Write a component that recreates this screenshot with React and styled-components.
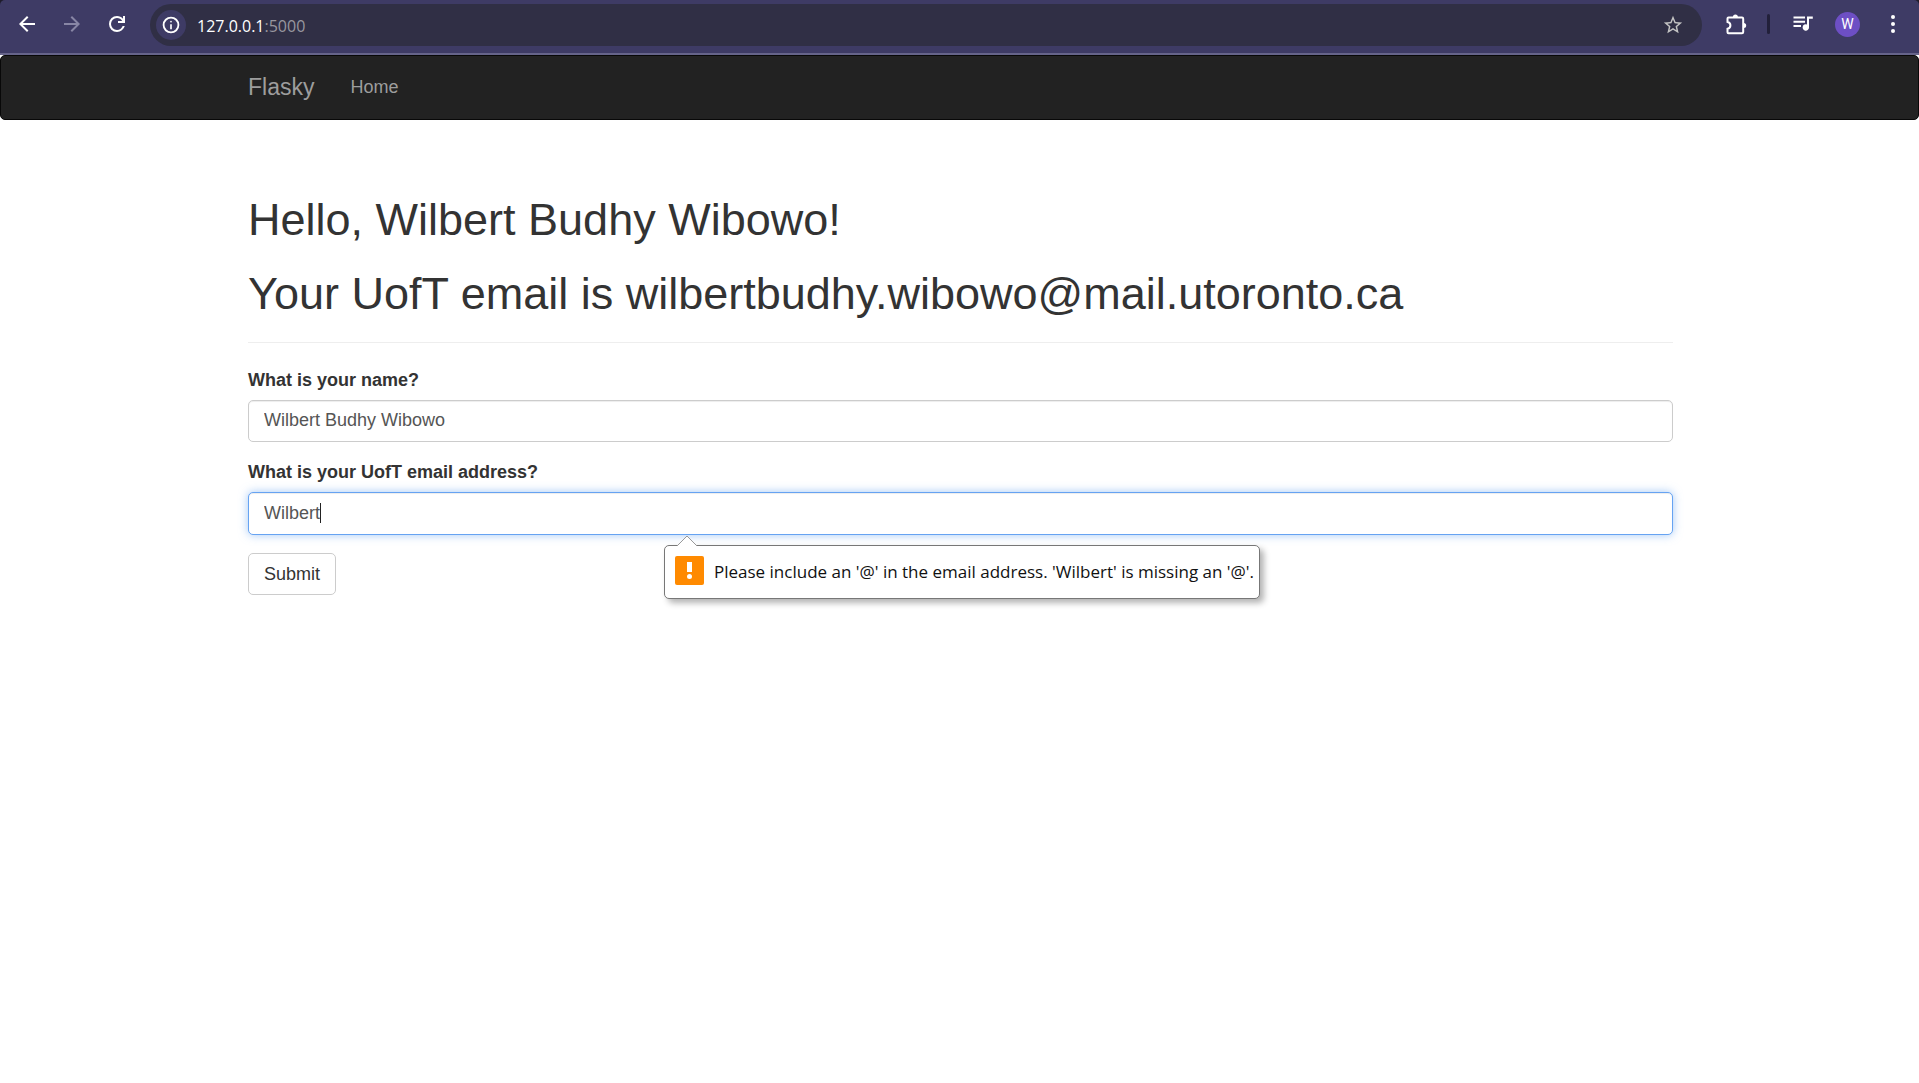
import React from "react";
import styled, { createGlobalStyle } from "styled-components";

const GlobalStyle = createGlobalStyle`
  *, *::before, *::after { box-sizing: border-box; }
  body {
    margin: 0;
    background: #fff;
    color: #333;
    font: 18px/25px "Liberation Sans", Arial, sans-serif;
  }
`;

const Page = styled.div`
  min-height: 100vh;
`;

/* ---------- browser toolbar ---------- */

const Chrome = styled.div`
  background: #1f1d2b;
`;

const Toolbar = styled.header`
  display: flex;
  align-items: center;
  height: 55px;
  padding: 0 14px 5px;
  border-bottom: 2px solid #66648a;
  border-radius: 5px 5px 0 0;
  background: #3e3b65;
`;

const IconButton = styled.button`
  display: flex;
  align-items: center;
  justify-content: center;
  flex: none;
  width: 25px;
  height: 25px;
  padding: 0;
  border: 0;
  background: none;
  color: ${(p) => p.$color || "#fff"};
`;

const NavButtons = styled.div`
  display: flex;
  gap: 20px;
  margin-right: 21px;
`;

const AddressBar = styled.div`
  display: flex;
  align-items: center;
  flex: 1;
  height: 42px;
  margin-top: 2px;
  padding: 0 17px 0 6px;
  border-radius: 21px;
  background: #302f45;
`;

const SiteInfo = styled.button`
  display: flex;
  align-items: center;
  justify-content: center;
  width: 30px;
  height: 30px;
  padding: 0;
  border: 0;
  border-radius: 50%;
  background: #3e3b65;
  color: #fff;
`;

const Url = styled.div`
  flex: 1;
  padding: 1px 0 0 11px;
  color: #fff;
  font: 16px/24px "Open Sans", "Noto Sans", sans-serif;
`;

const Port = styled.span`
  color: #98979f;
`;

const Actions = styled.div`
  display: flex;
  align-items: center;
  gap: 20px;
  margin-left: 20px;
`;

const Separator = styled.span`
  width: 3px;
  height: 20px;
  border-radius: 2px;
  background: #22203a;
`;

const Avatar = styled(IconButton)`
  border-radius: 50%;
  background: #6d4fc4;
  font: 14px/25px Roboto, sans-serif;
`;

/* ---------- page ---------- */

const Container = styled.div`
  max-width: 1465px;
  margin: 0 auto;
  padding: 0 19px 0 21px;
`;

const Navbar = styled.nav`
  border: 1px solid #080808;
  border-radius: 5px;
  background: #222;
`;

const NavRow = styled(Container)`
  display: flex;
  align-items: center;
  gap: 36px;
  height: 63px;
`;

const NavLink = styled.a`
  color: #9d9d9d;
  font-size: ${(p) => (p.$brand ? 23 : 18)}px;
  text-decoration: none;
`;

const Greeting = styled.div`
  margin: 75px 0 25px;
  padding-bottom: 24px;
  border-bottom: 1px solid #eee;
`;

const Title = styled.h1`
  margin: 0;
  font-size: 45px;
  font-weight: 400;
  line-height: 49px;

  & + & { margin-top: 25px; }
`;

const Field = styled.div`
  position: relative;
  margin-bottom: 18px;
`;

const Label = styled.label`
  display: block;
  margin-bottom: 7px;
  font-weight: 700;
`;

const Input = styled.input`
  display: block;
  width: 100%;
  height: ${(p) => (p.$active ? 43 : 42)}px;
  padding: 6px 15px 7px;
  border: 1px solid ${(p) => (p.$active ? "#66a3f2" : "#ccc")};
  border-radius: 5px;
  outline: 0;
  background: #fff;
  box-shadow: inset 0 1px 1px rgba(0, 0, 0, 0.075)${(p) => (p.$active ? ", 0 0 10px rgba(102, 163, 242, 0.6)" : "")};
  color: #555;
  font: inherit;
`;

const Caret = styled.span`
  position: absolute;
  left: 72px;
  bottom: 12px;
  width: 1px;
  height: 20px;
  background: #222;
`;

const Bubble = styled.div`
  position: absolute;
  top: calc(100% + 10px);
  left: 416px;
  display: flex;
  align-items: center;
  gap: 10px;
  height: 54px;
  padding: 0 5px 0 10px;
  border: 1px solid #777;
  border-radius: 5px;
  background: #fff;
  box-shadow: 4px 4px 6px rgba(0, 0, 0, 0.3);
  color: #111;
  font: 17px/24px "Open Sans", "Noto Sans", sans-serif;
  white-space: nowrap;
`;

const BubbleTip = styled.svg`
  position: absolute;
  left: 11px;
  top: -11px;
`;

const Warning = styled.svg`
  flex: none;
  margin-bottom: 4px;
`;

const Submit = styled.button`
  height: 42px;
  padding: 0 15px;
  border: 1px solid #ccc;
  border-radius: 5px;
  background: #fff;
  color: #333;
  font: inherit;
`;

const Glyph = ({ d, size = 24 }) => (
  <svg width={size} height={size} viewBox="0 0 24 24" fill="currentColor" aria-hidden="true">
    <path d={d} />
  </svg>
);

const BACK = "M7.825 13l5.6 5.6L12 20l-8-8 8-8 1.425 1.4L7.825 11H20v2z";
const FORWARD = "M16.175 13l-5.6 5.6L12 20l8-8-8-8-1.425 1.4L16.175 11H4v2z";
const RELOAD =
  "M12 20q-3.35 0-5.675-2.325T4 12t2.325-5.675T12 4q1.725 0 3.3.713T18 6.75V4h2v7h-7V9h4.2q-.8-1.4-2.187-2.2T12 6Q9.5 6 7.75 7.75T6 12t1.75 4.25T12 18q1.925 0 3.475-1.1T17.65 14h2.1q-.7 2.65-2.85 4.325T12 20";
const INFO =
  "M11 17h2v-6h-2zm1-8q.425 0 .713-.288T13 8t-.288-.712T12 7t-.712.288T11 8t.288.713T12 9m0 13a10 10 0 1 1 0-20 10 10 0 0 1 0 20m0-2.200a7.800 7.800 0 1 0 0-15.600 7.800 7.800 0 0 0 0 15.600";
const STAR =
  "M22 9.240l-7.190-.62L12 2 9.190 8.630 2 9.240l5.460 4.730L5.820 21 12 17.270 18.180 21l-1.630-7.030zM12 15.400l-3.760 2.270 1-4.280-3.320-2.880 4.380-.38L12 6.100l1.710 4.040 4.380.38-3.320 2.880 1 4.280z";
const QUEUE =
  "M2.500 4.500h11.500v2H2.500zM2.500 8.800h11.500v2H2.500zM2.500 13.100h7.500v2H2.500zM16 4.500h5.800v2.200H18v8.700a3.200 3.200 0 1 1-2-2.900z";

export default function App() {
  return (
    <Page>
      <GlobalStyle />
      <Chrome>
        <Toolbar>
          <NavButtons>
            <IconButton aria-label="Back"><Glyph d={BACK} /></IconButton>
            <IconButton aria-label="Forward" $color="#8886a5"><Glyph d={FORWARD} /></IconButton>
            <IconButton aria-label="Reload"><Glyph d={RELOAD} /></IconButton>
          </NavButtons>
          <AddressBar>
            <SiteInfo aria-label="View site information"><Glyph d={INFO} size={20} /></SiteInfo>
            <Url>127.0.0.1<Port>:5000</Port></Url>
            <IconButton aria-label="Bookmark this page" $color="#c4c4c4"><Glyph d={STAR} size={22} /></IconButton>
          </AddressBar>
          <Actions>
            <IconButton aria-label="Extensions">
              <svg width="24" height="24" viewBox="-1 0 24 24" aria-hidden="true">
                <path
                  d="M4.500 5.500H18a1.200 1.200 0 0 1 1.200 1.200V20a1.200 1.200 0 0 1-1.200 1.200H4.500A1 1 0 0 1 3.500 20.200V16.800A3.500 3.500 0 0 0 3.500 9.900V6.500A1 1 0 0 1 4.500 5.500z"
                  fill="none"
                  stroke="currentColor"
                  strokeWidth="2"
                />
                <path d="M8.900 5a2.500 2.500 0 0 1 5 0zM19.700 10.900a2.500 2.500 0 0 1 0 5z" fill="currentColor" />
              </svg>
            </IconButton>
            <Separator />
            <IconButton aria-label="Media controls"><Glyph d={QUEUE} /></IconButton>
            <Avatar aria-label="Profile">W</Avatar>
            <IconButton aria-label="Menu">
              <svg width="24" height="24" viewBox="0 0 24 24" fill="currentColor" aria-hidden="true">
                <circle cx="12" cy="5" r="2" />
                <circle cx="12" cy="12" r="2" />
                <circle cx="12" cy="19" r="2" />
              </svg>
            </IconButton>
          </Actions>
        </Toolbar>
      </Chrome>

      <Navbar>
        <NavRow>
          <NavLink href="#" $brand>Flasky</NavLink>
          <NavLink href="#">Home</NavLink>
        </NavRow>
      </Navbar>

      <Container as="main">
        <Greeting>
          <Title>Hello, Wilbert Budhy Wibowo!</Title>
          <Title>Your UofT email is wilbertbudhy.wibowo@mail.utoronto.ca</Title>
        </Greeting>
        <form noValidate onSubmit={(e) => e.preventDefault()}>
          <Field>
            <Label htmlFor="name">What is your name?</Label>
            <Input id="name" type="text" defaultValue="Wilbert Budhy Wibowo" />
          </Field>
          <Field>
            <Label htmlFor="email">What is your UofT email address?</Label>
            <Input id="email" type="email" defaultValue="Wilbert" aria-describedby="email-error" $active />
            <Caret />
            <Bubble id="email-error" role="alert">
              <BubbleTip width="22" height="12" viewBox="0 0 22 12" aria-hidden="true">
                <path d="M1 11L11 1l10 10v1H1z" fill="#fff" />
                <path d="M1 11L11 1l10 10" fill="none" stroke="#999" />
              </BubbleTip>
              <Warning width="29" height="29" viewBox="0 0 29 29" aria-hidden="true">
                <rect width="29" height="29" rx="2" fill="#ff8a00" />
                <path d="M12 6h5v10h-5z" fill="#fff" />
                <circle cx="14.500" cy="20.500" r="2.500" fill="#fff" />
              </Warning>
              Please include an '@' in the email address. 'Wilbert' is missing an '@'.
            </Bubble>
          </Field>
          <Submit type="submit">Submit</Submit>
        </form>
      </Container>
    </Page>
  );
}
